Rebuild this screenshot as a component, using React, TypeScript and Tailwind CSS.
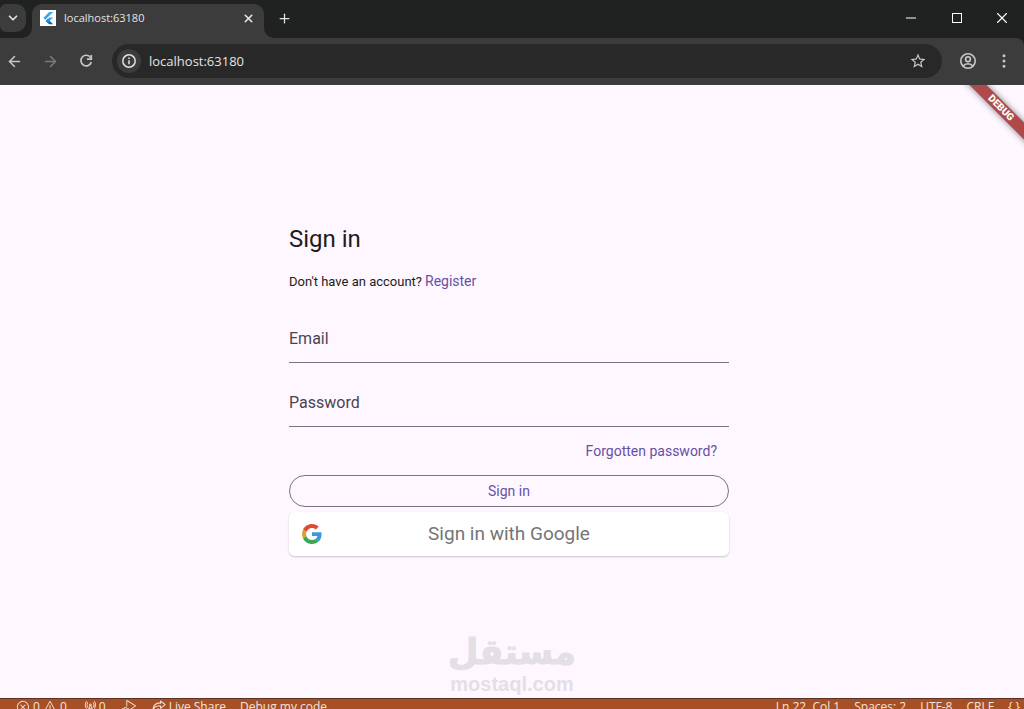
import React from 'react';
import { ArrowLeft, ArrowRight, ChevronDown, EllipsisVertical, Minus, Plus, X } from 'lucide-react';
import { MdStarBorder } from 'react-icons/md';
import { VscDebugAlt, VscError, VscLiveShare, VscRadioTower, VscWarning } from 'react-icons/vsc';

const UI_FONT = 'font-["Open_Sans","Noto_Sans",sans-serif]';
const PAGE_FONT = 'font-[Roboto,"Liberation_Sans",sans-serif]';

function FlutterLogo() {
  return (
    <svg viewBox="0 0 16 16" className="w-4 h-4 shrink-0 bg-white" aria-hidden="true">
      <path d="M9.2 2h4L5.3 9.800 3.300 7.900z" fill="#42a5e8" />
      <path d="M9.2 7.400h4l-3.600 3.500-2-1.900z" fill="#42a5e8" />
      <path d="M5.700 10.900l2-1.900 5.500 5.200h-4z" fill="#1b5f9e" />
      <path d="M5.700 10.900l2-1.900 2 1.900-2 2z" fill="#2f8fd6" />
    </svg>
  );
}

function GoogleLogo() {
  return (
    <svg viewBox="0 0 48 48" className="w-5 h-5" aria-hidden="true">
      <path fill="#dd4b30" d="M24 9.5c3.54 0 6.71 1.22 9.21 3.6l6.85-6.85C35.9 2.38 30.47 0 24 0 14.62 0 6.51 5.38 2.56 13.22l7.98 6.19C12.43 13.72 17.74 9.5 24 9.5z" />
      <path fill="#3f96e0" d="M46.98 24.55c0-1.57-.15-3.09-.38-4.55H24v9.02h12.94c-.58 2.96-2.26 5.48-4.78 7.18l7.73 6c4.51-4.18 7.09-10.36 7.09-17.65z" />
      <path fill="#dda02f" d="M10.53 28.59c-.48-1.45-.76-2.99-.76-4.59s.27-3.14.76-4.59l-7.98-6.19C.92 16.46 0 20.12 0 24c0 3.88.92 7.54 2.56 10.78l7.97-6.19z" />
      <path fill="#3aa757" d="M24 48c6.48 0 11.93-2.13 15.89-5.81l-7.73-6c-2.15 1.45-4.92 2.3-8.16 2.3-6.26 0-11.57-4.22-13.47-9.91l-7.98 6.19C6.51 42.62 14.62 48 24 48z" />
    </svg>
  );
}

function TabStrip() {
  return (
    <div className="h-[38px] shrink-0 flex bg-[#202221] text-[#e3e3e3]">
      <button aria-label="Search tabs" className="mt-1 w-[26px] h-7 rounded-r-[10px] rounded-l-md bg-[#3c3c3c] flex items-center justify-center">
        <ChevronDown size={14} strokeWidth={3} />
      </button>

      <div className="relative mt-1 ml-1.5 w-[232px] rounded-t-[10px] bg-[#3c3c3c] flex items-center px-2 pb-1.5">
        {/* curved feet on both sides of the active tab */}
        <svg viewBox="0 0 10 10" className="absolute bottom-0 -left-2.5 w-2.5 h-2.5" aria-hidden="true"><path d="M10 0v10H0A10 10 0 0 0 10 0z" fill="#3c3c3c" /></svg>
        <svg viewBox="0 0 10 10" className="absolute bottom-0 -right-2.5 w-2.5 h-2.5" aria-hidden="true"><path d="M0 0v10h10A10 10 0 0 1 0 0z" fill="#3c3c3c" /></svg>
        <FlutterLogo />
        <span className="ml-2 flex-1 text-[11px] leading-4">localhost:63180</span>
        <button aria-label="Close tab" className="w-4 h-4 flex items-center justify-center"><X size={13} strokeWidth={3} /></button>
      </div>

      <button aria-label="New tab" className="ml-3 w-4 pb-0.5 flex items-center justify-center"><Plus size={15} strokeWidth={2} /></button>

      <div className="ml-auto flex pb-0.5 text-white">
        <button aria-label="Minimize" className="w-[46px] flex items-center justify-center"><Minus size={16} strokeWidth={1.5} /></button>
        <button aria-label="Maximize" className="w-[46px] flex items-center justify-center"><span className="w-2.5 h-2.5 border border-white" /></button>
        <button aria-label="Close" className="w-[44px] flex items-center justify-center"><X size={18} strokeWidth={1.5} /></button>
      </div>
    </div>
  );
}

function Toolbar() {
  return (
    <div className="h-[47px] shrink-0 flex items-center bg-[#3c3c3c] rounded-tr-lg pl-1 pr-2.5 pb-px text-[#c7c7c7]">
      <button aria-label="Back" className="w-5 h-5 flex items-center justify-center"><ArrowLeft size={17} strokeWidth={2.2} /></button>
      <button aria-label="Forward" className="ml-4 w-5 h-5 flex items-center justify-center text-[#7b7b7b]"><ArrowRight size={17} strokeWidth={2.2} /></button>
      <button aria-label="Reload" className="ml-4 w-5 h-5 flex items-center justify-center">
        <svg viewBox="0 0 16 16" className="w-4 h-4" fill="none" stroke="currentColor" strokeWidth="1.7" aria-hidden="true">
          <path d="M12.6 4.6A5.3 5.3 0 1 0 13.3 9" />
          <path d="M13.3 2v4.2H9" />
        </svg>
      </button>

      <div className="ml-4 flex-1 h-[34px] rounded-full bg-[#282828] flex items-center pl-[5px] pr-[15px]">
        <button aria-label="View site information" className="w-6 h-6 rounded-full bg-[#3c3c3c] flex items-center justify-center text-[#e3e3e3]">
          <svg viewBox="0 0 16 16" className="w-4 h-4" fill="none" stroke="currentColor" strokeWidth="1.5" aria-hidden="true">
            <circle cx="8" cy="8" r="6.2" />
            <path d="M8 7.2v4M8 4.5v1.6" />
          </svg>
        </button>
        <input aria-label="Address" defaultValue="localhost:63180" className="ml-2 flex-1 min-w-0 bg-transparent text-[13px] leading-5 text-[#e3e3e3] outline-none" />
        <button aria-label="Bookmark this tab" className="w-[18px] h-[18px] flex items-center justify-center"><MdStarBorder size={18} /></button>
      </div>

      <button aria-label="Profile" className="ml-4 w-5 h-5 flex items-center justify-center">
        <svg viewBox="0 0 18 18" className="w-[18px] h-[18px]" fill="none" stroke="currentColor" strokeWidth="1.6" aria-hidden="true">
          <circle cx="9" cy="9" r="7.2" />
          <circle cx="9" cy="7.2" r="2.4" />
          <path d="M4 14c1.4-1.6 3-2.3 5-2.3s3.6.7 5 2.3" />
        </svg>
      </button>
      <button aria-label="Menu" className="ml-4 w-5 h-5 flex items-center justify-center"><EllipsisVertical size={18} strokeWidth={2} /></button>
    </div>
  );
}

function DebugBanner() {
  return (
    <div className="absolute top-0 right-0 w-20 h-20 overflow-hidden">
      <div className="absolute top-[17px] right-[-37px] w-[120px] h-3 rotate-45 bg-[#b04a4a] shadow-[0_0_6px_rgba(0,0,0,0.5)] text-center text-[10px] leading-3 font-black text-white">
        DEBUG
      </div>
    </div>
  );
}

function SignInForm() {
  return (
    <form className="w-[440px] max-w-full flex flex-col" onSubmit={(e) => e.preventDefault()}>
      <h1 className="text-[24px] leading-8 text-[#1d1b20]">Sign in</h1>
      <p className="mt-4 flex items-baseline gap-[3px] leading-5 text-[13px] text-[#1d1b20]">
        Don't have an account?
        <a href="#register" className="text-[14px] text-[#6750a4]">Register</a>
      </p>
      <input type="email" aria-label="Email" placeholder="Email" className="mt-[23px] h-12 w-full border-b border-[#79747e] bg-transparent text-[16px] placeholder:text-[#49454f] outline-none" />
      <input type="password" aria-label="Password" placeholder="Password" className="mt-4 h-12 w-full border-b border-[#79747e] bg-transparent text-[16px] placeholder:text-[#49454f] outline-none" />
      <div className="mt-2 flex justify-end">
        <button type="button" className="h-8 px-3 text-[14px] text-[#6750a4]">Forgotten password?</button>
      </div>
      <button type="submit" className="mt-2 h-8 w-full rounded-full border border-[#79747e] text-[14px] text-[#6750a4]">Sign in</button>
      <button type="button" className="mt-[5px] h-11 w-full rounded-md bg-white shadow-[0_1px_2px_rgba(0,0,0,0.22)] flex items-center px-[13px] text-[#757575]">
        <GoogleLogo />
        <span className="flex-1 pr-5 text-center text-[19px]">Sign in with Google</span>
      </button>
    </form>
  );
}

function Watermark() {
  return (
    <div className="absolute bottom-0 left-1/2 -translate-x-1/2 flex flex-col items-center text-[#e3e0e5] font-bold">
      <span lang="ar" dir="rtl" className='font-["DejaVu_Sans",sans-serif] text-[35px] leading-9 [-webkit-text-stroke:1px_#e3e0e5]'>مستقل</span>
      <span className='font-["Liberation_Sans",sans-serif] text-[20px] leading-7'>mostaql.com</span>
    </div>
  );
}

function StatusBar() {
  return (
    <footer className="h-[11px] shrink-0 overflow-hidden border-t border-[#5b3326] bg-[#a85025] text-[#f1e5df]">
      <div className="h-4 flex items-center justify-between pl-4 pr-1 text-[12px] leading-4 whitespace-nowrap">
        <div className="flex items-center">
          <span className="flex items-center gap-[3px]"><VscError size={14} />0<VscWarning size={14} />0</span>
          <span className="ml-4 flex items-center gap-0.5"><VscRadioTower size={14} />0</span>
          <VscDebugAlt size={14} className="ml-4" />
          <span className="ml-4 flex items-center gap-[3px]"><VscLiveShare size={14} />Live Share</span>
          <span className="ml-3.5">Debug my code</span>
        </div>
        <div className="flex items-center gap-3.5">
          <span>Ln 22, Col 1</span>
          <span>Spaces: 2</span>
          <span>UTF-8</span>
          <span>CRLF</span>
          <span>{'{ }'}</span>
        </div>
      </div>
    </footer>
  );
}

export default function App() {
  return (
    <div className={`h-screen flex flex-col overflow-hidden bg-[#202221] ${UI_FONT}`}>
      <TabStrip />
      <Toolbar />
      <main className={`relative flex-1 min-h-0 flex items-center justify-center pr-1.5 pb-1 bg-[#fef7ff] ${PAGE_FONT}`}>
        <SignInForm />
        <Watermark />
        <DebugBanner />
      </main>
      <StatusBar />
    </div>
  );
}
